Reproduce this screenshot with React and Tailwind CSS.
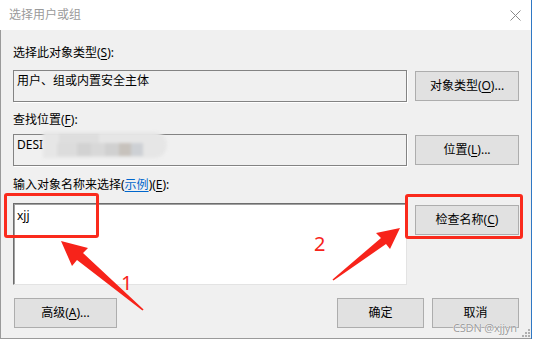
import React from "react";

const font = { fontFamily: '"Noto Sans", "Noto Sans CJK SC", sans-serif' };

function Btn({ children, className = "" }) {
  return (
    <div
      className={`h-[30px] flex items-center justify-center bg-[#e1e1e1] border border-[#adadad] text-[12px] text-black leading-none ${className}`}
    >
      {children}
    </div>
  );
}

function U({ children }) {
  return <span className="underline underline-offset-2 decoration-1">{children}</span>;
}

export default function App() {
  return (
    <div className="relative w-[537px] h-[341px] bg-white overflow-hidden" style={font}>
      <div className="w-[532px] h-[339px] flex flex-col border-r border-[#2f78c4]">
        {/* title bar */}
        <div className="h-[30px] flex items-center justify-between pl-[9px] pr-[10px] bg-white">
          <span className="text-[12px] text-[#9a9a9a] leading-none">选择用户或组</span>
          <svg width="11" height="11" viewBox="0 0 11 11">
            <path d="M0.5 0.5 L10.5 10.5 M10.5 0.5 L0.5 10.5" stroke="#8a8a8a" strokeWidth="1" />
          </svg>
        </div>

        {/* body */}
        <div className="flex-1 flex flex-col bg-[#f0f0f0] border-l border-b border-[#9a9a9a] pl-[12px] pr-[12px] text-[12px] text-black">
          <div className="mt-[15px] h-[16px] leading-[16px]">
            选择此对象类型(<U>S</U>):
          </div>
          <div className="mt-[9px] flex items-center gap-[8px]">
            <div className="w-[394px] h-[32px] border border-[#838383] shadow-[1px_1px_0_#ffffff] pl-[3px] pt-[2px] leading-[16px]">
              用户、组或内置安全主体
            </div>
            <Btn className="w-[104px]">
              对象类型(<U>O</U>)...
            </Btn>
          </div>

          <div className="mt-[10px] h-[16px] leading-[16px]">
            查找位置(<U>F</U>):
          </div>
          <div className="mt-[6px] flex items-center gap-[8px]">
            <div className="relative w-[394px] h-[32px] border border-[#838383] shadow-[1px_1px_0_#ffffff] pl-[3px] pt-[2px] leading-[16px]">
              DESI
              {/* blurred part */}
              <div className="absolute left-[29px] top-[-3px] w-[124px] h-[26px] rounded-r-full rounded-l-[10px] bg-[#e6e6e6] blur-[1.5px]">
                <div className="absolute left-[16px] top-[2px] w-[40px] h-[10px] bg-[#dedede]" />
                <div className="absolute left-[14px] top-[11px] w-[20px] h-[13px] bg-[#dcdcdc]" />
                <div className="absolute left-[34px] top-[11px] w-[14px] h-[13px] bg-[#d2d2d2]" />
                <div className="absolute left-[48px] top-[11px] w-[14px] h-[13px] bg-[#d8d8d8]" />
                <div className="absolute left-[62px] top-[11px] w-[14px] h-[13px] bg-[#d0d0d0]" />
                <div className="absolute left-[76px] top-[11px] w-[12px] h-[13px] bg-[#c7c2bc]" />
                <div className="absolute left-[88px] top-[11px] w-[12px] h-[13px] bg-[#cdd0d4]" />
              </div>
            </div>
            <Btn className="w-[104px]">
              位置(<U>L</U>)...
            </Btn>
          </div>

          <div className="mt-[11px] h-[16px] leading-[16px]">
            输入对象名称来选择(<span className="text-[#0066cc] underline underline-offset-2">示例</span>)(<U>E</U>):
          </div>
          <div className="mt-[10px] flex items-start gap-[8px]">
            <div className="w-[394px] h-[82px] bg-white border-t border-l border-[#6d6d6d] border-r border-b border-r-[#e3e3e3] border-b-[#e3e3e3] shadow-[inset_1px_1px_0_#a0a0a0] pl-[3px] pt-[4px] leading-[16px]">
              xjj
            </div>
            <Btn className="w-[104px] mt-[2px]">
              检查名称(<U>C</U>)
            </Btn>
          </div>

          <div className="mt-[13px] flex items-center">
            <Btn className="w-[103px] ml-[1px]">
              高级(<U>A</U>)...
            </Btn>
            <div className="flex-1" />
            <div className="flex gap-[8px]">
              <Btn className="w-[87px]">确定</Btn>
              <Btn className="w-[87px]">取消</Btn>
            </div>
          </div>
        </div>
      </div>

      {/* annotations */}
      <div className="absolute left-[4px] top-[193px] w-[95px] h-[45px] border-[3px] border-[#fa2a1c] rounded-[3px]" />
      <div className="absolute left-[405px] top-[194px] w-[118px] h-[45px] border-[3px] border-[#fa2a1c] rounded-[3px]" />

      <svg className="absolute left-0 top-0" width="537" height="341" viewBox="0 0 537 341">
        <polygon
          points="61,241 88,248 83,253 143.6,309.4 142.4,310.6 77,260 72,266"
          fill="#f7231a"
        />
        <polygon
          points="400,228 390,249 386,244 333.5,280.6 332.5,279.4 381,238 376,233"
          fill="#f7231a"
        />
      </svg>
      <span className="absolute left-[121px] top-[273px] text-[20px] leading-none text-[#f7231a] font-normal">1</span>
      <span className="absolute left-[314px] top-[234px] text-[20px] leading-none text-[#f7231a] font-normal">2</span>

      {/* watermark */}
      <span
        className="absolute left-[453px] top-[323px] text-[11px] leading-[10px] text-[#9c9c9c] tracking-[-0.2px]"
        style={{ textShadow: "0 0 1px #fff, 0 0 1px #fff" }}
      >
        CSDN @xjjyn
      </span>
      {/* resize grip */}
      <svg className="absolute left-[522px] top-[329px]" width="8" height="8" viewBox="0 0 8 8">
        <rect x="6" y="0" width="2" height="2" fill="#b0b0b0" />
        <rect x="3" y="3" width="2" height="2" fill="#b0b0b0" />
        <rect x="6" y="3" width="2" height="2" fill="#b0b0b0" />
        <rect x="0" y="6" width="2" height="2" fill="#b0b0b0" />
        <rect x="3" y="6" width="2" height="2" fill="#b0b0b0" />
        <rect x="6" y="6" width="2" height="2" fill="#b0b0b0" />
      </svg>
    </div>
  );
}
